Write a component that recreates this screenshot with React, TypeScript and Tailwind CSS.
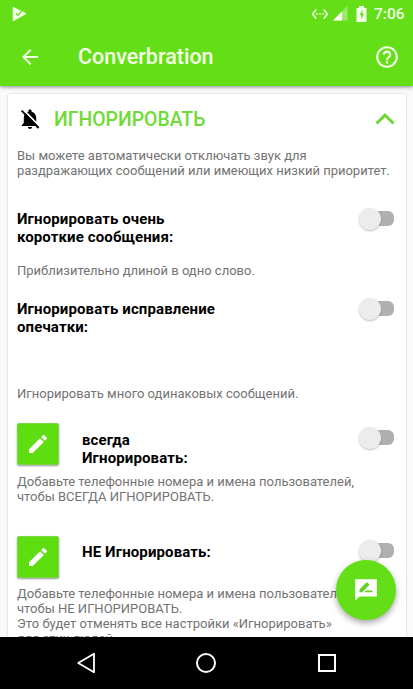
import type { ReactNode } from "react";
import { MdArrowBack, MdEdit, MdHelpOutline, MdSettingsEthernet } from "react-icons/md";

function StatusBar() {
  return (
    <div className="flex h-[27px] items-center justify-between pl-3 pr-[9px] text-white/90">
      <svg viewBox="0 0 15 16" className="h-4 w-[15px]">
        <path d="M1.2 1.4 14 7.6 1.2 14.8Z" fill="#f4ffe6" stroke="#f4ffe6" strokeLinejoin="round" />
        <path d="M4 7.2 6.2 9.4 10.4 4.2" fill="none" stroke="#64df17" strokeWidth="1.3" />
      </svg>
      <div className="flex items-center">
        <MdSettingsEthernet className="size-[18px]" />
        <svg viewBox="0 0 15 15" className="ml-1 size-[15px]">
          <path d="M14.5 0V14.5H0Z" fill="#fff" opacity=".35" />
          <path d="M9 5.5V14.5H0Z" fill="#fff" />
        </svg>
        <svg viewBox="0 0 11 16" className="ml-[8px] h-4 w-[11px]">
          <path d="M3 0H8V2H10.5V16H.5V2H3Z" fill="currentColor" />
          <path d="M7 4 3.4 8.8H5.2V13L8 8H6.2Z" fill="#64df17" />
        </svg>
        <span className="ml-[7px] w-[30px] whitespace-nowrap text-[15.5px] font-medium leading-4">7:06</span>
      </div>
    </div>
  );
}

function Header() {
  return (
    <header className="relative z-10 h-[86px] shrink-0 bg-[#64df17] shadow-[0_1px_4px_rgba(0,0,0,0.45)]">
      <StatusBar />
      <div className="flex h-[59px] items-center pl-[18px] pr-[13px] text-[#f4ffe8]">
        <MdArrowBack className="size-6" />
        <h1 className="ml-[36px] flex-1 text-[21.5px] font-medium leading-7">Converbration</h1>
        <MdHelpOutline className="size-[26px]" />
      </div>
    </header>
  );
}

function BellOffIcon() {
  return (
    <svg viewBox="0 0 24 24" className="ml-px size-6">
      <path
        d="M12 22c1.1 0 2-.9 2-2h-4c0 1.1.9 2 2 2zm6.2-6v-5c0-3.1-1.7-5.7-4.6-6.3V4c0-.9-.7-1.6-1.6-1.6s-1.6.7-1.6 1.6v.7C7.5 5.3 5.8 7.9 5.8 11v5l-2 2v1h16.4v-1z"
        fill="#000"
      />
      <path d="M5.6 2.8 21.6 19.3" stroke="#fff" strokeWidth="1.7" />
      <path d="M3.6 3.6 20.6 21" stroke="#000" strokeWidth="1.8" />
    </svg>
  );
}

function ReviewIcon() {
  return (
    <svg viewBox="0 0 24 24" className="size-[26px]">
      <path d="M2 2H22V18H6L2 22Z" fill="#fff" />
      <path d="M6 14V11.5L12.9 4.7 15.3 7.1 8.5 14ZM10.5 14 12 12.5H18V14Z" fill="#64cf25" />
    </svg>
  );
}

function Switch() {
  return (
    <div className="flex h-[23px] w-9 shrink-0 items-center">
      <span className="z-10 size-[22px] shrink-0 rounded-full bg-[#ececec] shadow-[0_1px_2px_rgba(0,0,0,0.25)]" />
      <span className="-ml-3 h-[15px] w-[25px] shrink-0 rounded-r-[6px] bg-[#b0b0b0]" />
    </div>
  );
}

function EditButton() {
  return (
    <button className="flex size-[42px] shrink-0 items-center justify-center rounded-[2px] border border-[#7dd845] bg-[#5edd10] text-white shadow-[0_1px_2px_rgba(0,0,0,0.4)]">
      <MdEdit className="size-6" />
    </button>
  );
}

function Description({ lines, className = "" }: { lines: string[]; className?: string }) {
  return (
    <p className={`whitespace-nowrap text-[13px] leading-[15px] text-[#737373] ${className}`}>
      {lines.map((line) => (
        <span key={line} className="block">
          {line}
        </span>
      ))}
    </p>
  );
}

function SettingTitle({ children }: { children: ReactNode }) {
  return (
    <h3 className="flex-1 whitespace-nowrap text-[15px] font-bold leading-[18px] tracking-[0.12px] text-black">
      {children}
    </h3>
  );
}

function NavBar() {
  return (
    <nav className="z-10 flex h-[52px] shrink-0 items-center bg-black pl-[76px]">
      <svg viewBox="0 0 20 22" className="h-[22px] w-5" fill="none" stroke="#fff" strokeWidth="1.8">
        <path d="M18 1.8V20.2L2.2 11Z" strokeLinejoin="round" />
      </svg>
      <span className="ml-[100px] size-5 rounded-full border-2 border-white" />
      <span className="ml-[102px] size-[18px] border-2 border-white" />
    </nav>
  );
}

export default function App() {
  return (
    <div className="relative flex h-[689px] w-[413px] flex-col overflow-hidden bg-[#fafafa] font-['Roboto',sans-serif]">
      <Header />

      <main className="min-h-0 flex-1 overflow-hidden px-2 pt-2">
        <section className="h-[600px] w-[398px] rounded-[2px] bg-white pl-[9px] pr-[11px] pt-[13px] shadow-[0_0_2px_rgba(0,0,0,0.25)]">
          <div className="flex h-6 items-center">
            <BellOffIcon />
            <h2 className="ml-[12px] mt-px flex-1 whitespace-nowrap text-[19.4px] font-medium leading-6 text-[#6fdb35]">
              ИГНОРИРОВАТЬ
            </h2>
            <svg viewBox="0 0 20 12" className="h-3 w-5" fill="none" stroke="#6cd935" strokeWidth="3">
              <path d="M1.5 10.5 10 2.2 18.5 10.5" />
            </svg>
          </div>
          <Description
            className="mt-[17px]"
            lines={["Вы можете автоматически отключать звук для", "раздражающих сообщений или имеющих низкий приоритет."]}
          />

          <div className="mt-[32px] flex items-start">
            <SettingTitle>
              Игнорировать очень
              <br />
              короткие сообщения:
            </SettingTitle>
            <div className="-mt-[3px]">
              <Switch />
            </div>
          </div>
          <Description className="mt-[17px]" lines={["Приблизительно длиной в одно слово."]} />

          <div className="mt-[22px] flex items-start">
            <SettingTitle>
              Игнорировать исправление
              <br />
              опечатки:
            </SettingTitle>
            <div className="-mt-[3px]">
              <Switch />
            </div>
          </div>
          <Description className="mt-[50px]" lines={["Игнорировать много одинаковых сообщений."]} />

          <div className="mt-[22px] flex h-[51px] items-start">
            <EditButton />
            <div className="ml-[23px] mt-2 flex-1">
              <SettingTitle>
                всегда
                <br />
                Игнорировать:
              </SettingTitle>
            </div>
            <div className="mt-[3px]">
              <Switch />
            </div>
          </div>
          <Description lines={["Добавьте телефонные номера и имена пользователей,", "чтобы ВСЕГДА ИГНОРИРОВАТЬ."]} />

          <div className="mt-[32px] flex h-[50px] items-start">
            <EditButton />
            <div className="ml-[23px] mt-[7px] flex-1">
              <SettingTitle>НЕ Игнорировать:</SettingTitle>
            </div>
            <div className="mt-[3px]">
              <Switch />
            </div>
          </div>
          <Description
            lines={[
              "Добавьте телефонные номера и имена пользователей,",
              "чтобы НЕ ИГНОРИРОВАТЬ.",
              "Это будет отменять все настройки «Игнорировать»",
              "для этих людей.",
            ]}
          />
        </section>
      </main>

      <button className="absolute bottom-[69px] right-[17px] z-20 flex size-[60px] items-center justify-center rounded-full bg-[#64df17] shadow-[0_3px_6px_rgba(0,0,0,0.35)]">
        <ReviewIcon />
      </button>

      <NavBar />
    </div>
  );
}
